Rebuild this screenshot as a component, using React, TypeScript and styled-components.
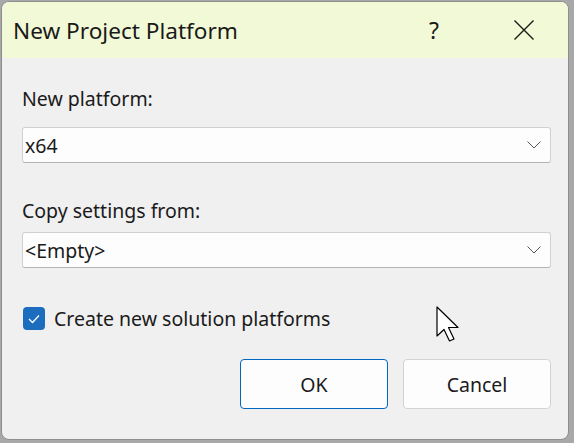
import React from "react";
import styled, { createGlobalStyle } from "styled-components";

const Global = createGlobalStyle`
  html, body { margin: 0; padding: 0; }
  body {
    width: 574px;
    height: 443px;
    overflow: hidden;
    background: #a8a8a8;
    font-family: "Noto Sans", "Open Sans", sans-serif;
  }
`;

const Stage = styled.div`
  width: 574px;
  height: 443px;
  padding: 1px 0 0 1px;
  box-sizing: border-box;
  position: relative;
`;

const Window = styled.div`
  width: 568px;
  height: 439px;
  box-sizing: border-box;
  border: 1px solid #8e8e8e;
  border-radius: 8px;
  overflow: hidden;
  background: #f0f0f0;
  display: flex;
  flex-direction: column;
`;

const TitleBar = styled.div`
  height: 56px;
  flex: none;
  background: #f2f9d6;
  display: flex;
  align-items: center;
  padding-left: 11px;
`;

const Title = styled.div`
  flex: 1;
  font-size: 22.6px;
  color: #1a1a1a;
`;

const TitleButton = styled.div<{ $w: number }>`
  width: ${(p) => p.$w}px;
  height: 56px;
  display: flex;
  align-items: center;
  justify-content: center;
  font-size: 23px;
  color: #1a1a1a;
`;

const Body = styled.div`
  flex: 1;
  display: flex;
  flex-direction: column;
  padding: 28px 17px 0 20px;
`;

const Label = styled.div<{ $top?: number; $bottom: number }>`
  font-size: 19.5px;
  color: #1a1a1a;
  line-height: 26px;
  margin-top: ${(p) => p.$top ?? 0}px;
  margin-bottom: ${(p) => p.$bottom}px;
`;

const Combo = styled.div`
  height: 36px;
  box-sizing: border-box;
  background: #fdfdfd;
  border: 1px solid #d0d0d0;
  border-bottom-color: #b4b4b4;
  border-radius: 3px;
  display: flex;
  align-items: center;
  padding: 0 9px 0 2px;
  font-size: 19.5px;
  color: #1a1a1a;
`;

const ComboText = styled.span`
  flex: 1;
`;

const CheckRow = styled.label`
  display: flex;
  align-items: center;
  gap: 9px;
  height: 27px;
  margin-top: 37px;
  padding-left: 1px;
  font-size: 19.5px;
  color: #1a1a1a;
`;

const CheckBox = styled.span`
  width: 22px;
  height: 23px;
  border-radius: 4px;
  background: #1d6dbf;
  display: flex;
  align-items: center;
  justify-content: center;
`;

const Buttons = styled.div`
  display: flex;
  justify-content: flex-end;
  gap: 15px;
  margin-top: 27px;
`;

const Button = styled.button<{ $primary?: boolean }>`
  width: 148px;
  height: 50px;
  box-sizing: border-box;
  border-radius: 4px;
  background: #fdfdfd;
  border: 1px solid ${(p) => (p.$primary ? "#0067c0" : "#d3d3d3")};
  font-family: inherit;
  font-size: 19.5px;
  color: #1a1a1a;
  padding: 0;
`;

const Cursor = styled.svg`
  position: absolute;
  left: 436px;
  top: 306px;
`;

const Chevron = () => (
  <svg width="14" height="8" viewBox="0 0 14 8">
    <polyline points="0.5,0.5 7,7 13.5,0.5" fill="none" stroke="#555" strokeWidth="1" />
  </svg>
);

export default function App() {
  return (
    <>
      <Global />
      <Stage>
        <Window>
          <TitleBar>
            <Title>New Project Platform</Title>
            <TitleButton $w={92}>?</TitleButton>
            <TitleButton $w={88}>
              <svg width="20" height="20" viewBox="0 0 20 20">
                <path d="M0.5 0.5 L19.5 19.5 M19.5 0.5 L0.5 19.5" stroke="#1a1a1a" strokeWidth="1.4" />
              </svg>
            </TitleButton>
          </TitleBar>
          <Body>
            <Label $bottom={15}>New platform:</Label>
            <Combo>
              <ComboText>x64</ComboText>
              <Chevron />
            </Combo>
            <Label $top={35} $bottom={8}>Copy settings from:</Label>
            <Combo>
              <ComboText>&lt;Empty&gt;</ComboText>
              <Chevron />
            </Combo>
            <CheckRow>
              <CheckBox>
                <svg width="12" height="10" viewBox="0 0 12 10">
                  <polyline points="1,5 4.5,8.5 11,1.5" fill="none" stroke="#fff" strokeWidth="1.3" />
                </svg>
              </CheckBox>
              Create new solution platforms
            </CheckRow>
            <Buttons>
              <Button $primary>OK</Button>
              <Button>Cancel</Button>
            </Buttons>
          </Body>
        </Window>
        <Cursor width="26" height="42" viewBox="0 0 26 42">
          <path d="M1 1 L1 30 L8 23.5 L13.5 35 L18 33 L12.5 21.5 L22 21.5 Z" fill="#fff" stroke="#000" strokeWidth="1.2" strokeLinejoin="round" />
        </Cursor>
      </Stage>
    </>
  );
}
